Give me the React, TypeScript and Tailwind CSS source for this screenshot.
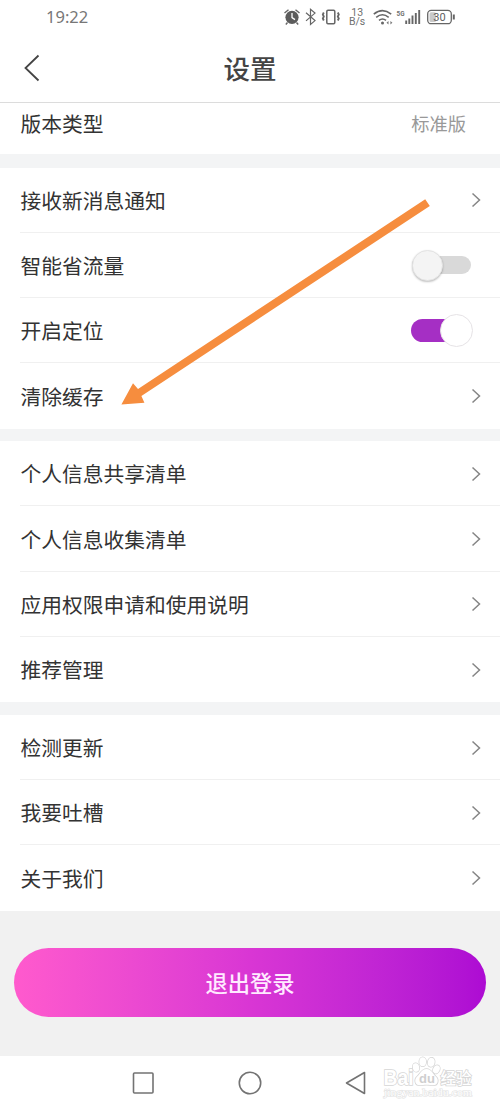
import React from "react";

type RowProps = {
  label: string;
  last?: boolean;
  children?: React.ReactNode;
};

function Chevron() {
  return (
    <svg className="mr-[19px] h-[16px] w-[10px]" viewBox="0 0 10 16" fill="none" stroke="#858585" strokeWidth="1.5">
      <path d="M1.5 1.5 8.5 8l-7 6.5" />
    </svg>
  );
}

function Row({ label, last = false, children = <Chevron /> }: RowProps) {
  return (
    <div className="h-[65.25px] pl-[20px]">
      <div
        className={
          last
            ? "flex h-full items-center justify-between"
            : "flex h-full items-center justify-between border-b border-[#f0f0f0] pt-px"
        }
      >
        <span className="whitespace-nowrap pl-[0.5px] text-[20.75px] leading-none text-[#333]">{label}</span>
        {children}
      </div>
    </div>
  );
}

function Gap() {
  return <div className="h-[12.7px] bg-[#f3f4f5]" />;
}

function ToggleOff() {
  return (
    <div className="mr-[29px] flex h-[34px] w-[59px] items-center">
      <div className="flex h-[18px] w-full items-center rounded-full bg-[#d9d9d9]">
        <div className="h-[31px] w-[31px] shrink-0 rounded-full border border-[#e4e4e4] bg-[#f4f4f4] shadow-[0_1px_2px_rgba(0,0,0,0.25)]" />
      </div>
    </div>
  );
}

function ToggleOn() {
  return (
    <div className="mr-[27px] flex h-[34px] w-[62px] items-center">
      <div className="flex h-[23px] w-full items-center justify-end rounded-l-full rounded-r-[16px] bg-linear-to-r from-[#a52fc4] from-80% to-transparent to-80%">
        <div className="h-[33px] w-[33px] shrink-0 rounded-full border border-[#e6e3e6] bg-white" />
      </div>
    </div>
  );
}

function StatusIcons() {
  return (
    <svg className="h-[22px] w-[175px]" viewBox="282 6 175 22" fill="none" stroke="#666" strokeWidth="1.4">
      <circle cx="292" cy="17.3" r="6.6" fill="#5c5c5c" stroke="none" />
      <path d="m284.5 13 4-3.3M299.5 13l-4-3.3M287.5 22.5l-1.7 2M296.5 22.5l1.7 2" />
      <path d="M292 13v4.6l3 2" stroke="#fff" strokeWidth="1.3" />
      <path d="m306 12.8 9 7.8-4.5 3.9V9.2l4.5 3.9-9 7.8" strokeWidth="1.2" />
      <rect x="326.8" y="10.2" width="8" height="13.6" rx="1.2" strokeWidth="1.5" />
      <path d="m323.8 12.5-1 2 1 2-1 2 1 2M337.8 12.5l1 2-1 2 1 2-1 2" strokeWidth="1.8" />
      <g fill="#707070" stroke="none" fontFamily="Roboto, sans-serif">
        <text x="351.3" y="15.6" fontSize="10.5">13</text>
        <text x="349" y="25.2" fontSize="10.5">B/s</text>
        <text x="396.5" y="15.5" fontSize="8" fontWeight="700" textLength="8" lengthAdjust="spacingAndGlyphs">5G</text>
      </g>
      <path d="M373.8 14.2q8.6-7 17.4 0" strokeWidth="1.6" />
      <path d="M376.2 17.3q6.2-5 12.5 0" strokeWidth="1.6" />
      <path d="M379 20.4q3.5-2.8 7 0" strokeWidth="1.6" />
      <circle cx="382.5" cy="23" r="1.5" fill="#666" stroke="none" />
      <path d="m386.5 22.8 2-1.8v3.6zM392.4 22.8l-2-1.8v3.6z" fill="#777" stroke="none" />
      <path d="M406.2 20.5V24M409.3 18.5V24M412.5 15.5V24M415.8 13V24M419.2 10V24" strokeWidth="1.9" />
      <rect x="427.7" y="10.4" width="23.6" height="13.3" rx="3.5" strokeWidth="1.3" />
      <rect x="429.5" y="12.2" width="6.5" height="9.7" rx="1.5" fill="#c9c9c9" stroke="none" />
      <path d="M453.8 14.5v5" strokeWidth="2" />
      <text x="433.3" y="20.9" fontSize="11" fontFamily="Roboto, sans-serif" fill="#606060" stroke="none">30</text>
    </svg>
  );
}

function Watermark() {
  return (
    <svg
      className="absolute left-[380px] top-[1054px] h-[48px] w-[96px]"
      viewBox="380 1054 96 48"
      fill="#fff"
      stroke="#d6d6d6"
      strokeWidth="1.6"
      paintOrder="stroke"
    >
      <g fontFamily="Liberation Sans, Arial, sans-serif" fontWeight="700">
        <text x="383.5" y="1084.8" fontSize="21.5" textLength="30" lengthAdjust="spacingAndGlyphs">Bai</text>
      </g>
      <ellipse cx="416" cy="1067.5" rx="3.2" ry="4.3" transform="rotate(-12 416 1067.5)" />
      <ellipse cx="422.7" cy="1061.8" rx="3.4" ry="4.5" />
      <ellipse cx="431.2" cy="1062.3" rx="3.4" ry="4.5" transform="rotate(12 431.2 1062.3)" />
      <ellipse cx="436.4" cy="1069.4" rx="3.2" ry="4.2" transform="rotate(25 436.4 1069.4)" />
      <path d="M426.5 1069c-5 0-6.2 5-9.3 7.6-3.3 3-2.3 8.7 2.3 8.7 2.5 0 4.5-.6 7-.6s4.5.6 7 .6c4.6 0 5.6-5.7 2.3-8.7-3.1-2.6-4.3-7.6-9.3-7.6Z" />
      <text x="419" y="1082.5" fontSize="13" fontFamily="Liberation Sans, Arial, sans-serif" fontWeight="700" fill="#cfcfcf" stroke="none">du</text>
      <text x="440.5" y="1084" fontSize="15.5" fontFamily="Noto Sans CJK SC, sans-serif" fontWeight="500">经验</text>
      <text x="384" y="1096" fontSize="11" fontFamily="Liberation Serif, serif" fill="#fff" stroke="#e2e2e2" strokeWidth="1.2" textLength="88" lengthAdjust="spacingAndGlyphs">jingyan.baidu.com</text>
    </svg>
  );
}

export default function App() {
  return (
    <main className="relative flex h-[1111px] w-[500px] flex-col overflow-hidden bg-white font-['Noto_Sans_CJK_SC',sans-serif]">
      <div className="flex h-[34px] shrink-0 items-center justify-between pl-[46px] pr-[43px]">
        <span className="font-['Noto_Sans',sans-serif] text-[16.5px] leading-none text-[#777]">19:22</span>
        <StatusIcons />
      </div>

      <header className="grid h-[69px] shrink-0 grid-cols-[1fr_auto_1fr] items-center border-b border-[#dcdcdc]">
        <svg className="ml-[23px] h-[28px] w-[18px]" viewBox="0 0 18 28" fill="none" stroke="#444" strokeWidth="1.8">
          <path d="M15.5 1.5 2.5 14l13 12.5" />
        </svg>
        <h1 className="text-[26.5px] font-medium leading-none text-[#444]">设置</h1>
      </header>

      <div className="flex h-[51px] shrink-0 items-center justify-between pb-[11px] pl-[20.5px] pr-[34px] leading-none">
        <span className="text-[20.75px] text-[#333]">版本类型</span>
        <span className="text-[18.3px] text-[#999]">标准版</span>
      </div>
      <div className="h-[13.5px] shrink-0 bg-[#f3f4f5]" />

      <section className="shrink-0">
        <Row label="接收新消息通知" />
        <Row label="智能省流量"><ToggleOff /></Row>
        <Row label="开启定位"><ToggleOn /></Row>
        <Row label="清除缓存" last />
        <Gap />
        <Row label="个人信息共享清单" />
        <Row label="个人信息收集清单" />
        <Row label="应用权限申请和使用说明" />
        <Row label="推荐管理" last />
        <Gap />
        <Row label="检测更新" />
        <Row label="我要吐槽" />
        <Row label="关于我们" last />
      </section>

      <div className="min-h-0 flex-1 bg-[#f1f1f1] px-[14px] pt-[37.3px]">
        <button className="block h-[69.5px] w-full rounded-full bg-linear-to-r from-[#ff5acd] via-[#d936d4] to-[#ad0bd3] pb-[2px] text-[22.3px] font-medium leading-none text-[#ffeaff]">
          退出登录
        </button>
      </div>

      <nav className="flex h-[55px] shrink-0 items-center justify-between pb-px pl-[132px] pr-[132px]">
        <svg className="h-[24px] w-[23px]" viewBox="0 0 23 24" fill="none" stroke="#737373" strokeWidth="1.6">
          <rect x="1.5" y="2" width="19.5" height="20" rx="1" />
        </svg>
        <svg className="h-[24px] w-[24px]" viewBox="0 0 24 24" fill="none" stroke="#737373" strokeWidth="1.6">
          <circle cx="12" cy="12" r="10.7" />
        </svg>
        <svg className="h-[24px] w-[23px]" viewBox="0 0 23 24" fill="none" stroke="#737373" strokeWidth="1.6" strokeLinejoin="round">
          <path d="M19.5 1.5v21L1.5 12Z" />
        </svg>
      </nav>

      <svg className="pointer-events-none absolute left-[120px] top-[195px] h-[212px] w-[312px]" viewBox="120 195 312 212" fill="#f68d3e">
        <path d="M425.2 199.2 138 389l-5-5.8-11.6 21.3 23-1.8-3-6.8L429.8 206Z" />
      </svg>
      <Watermark />
    </main>
  );
}
